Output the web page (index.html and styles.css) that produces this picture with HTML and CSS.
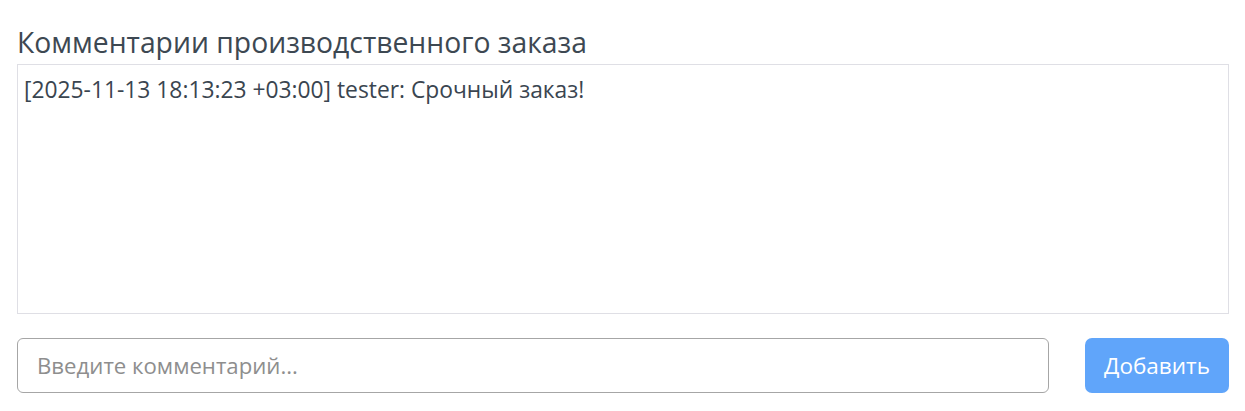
FILE: index.html
```html
<!DOCTYPE html>
<html lang="ru">
<head>
<meta charset="utf-8">
<link rel="stylesheet" href="styles.css">
</head>
<body>
<section class="comments">
  <h2 class="comments-title">Комментарии производственного заказа</h2>
  <div class="comments-log">[2025-11-13 18:13:23 +03:00] tester: Срочный заказ!</div>
  <form class="comment-form">
    <input class="comment-input" type="text" placeholder="Введите комментарий...">
    <button class="comment-btn" type="button">Добавить</button>
  </form>
</section>
</body>
</html>
```
FILE: styles.css
```css
html, body {
  margin: 0;
  background: #ffffff;
}
body {
  font-family: "Open Sans", "Noto Sans", sans-serif;
  color: #3a4550;
}
.comments {
  padding: 23px 16px 0 17px;
}
.comments-title {
  margin: 0 0 3px 0;
  font-size: 28.3px;
  font-weight: 400;
  line-height: 38px;
  color: #3d4852;
}
.comments-log {
  height: 250px;
  box-sizing: border-box;
  border: 1px solid #dfdfe5;
  padding: 10px 6px;
  font-size: 22.8px;
  line-height: 30px;
  color: #3a4550;
}
.comment-form {
  display: flex;
  gap: 36px;
  margin-top: 24px;
}
.comment-input {
  flex: 1;
  height: 55px;
  box-sizing: border-box;
  border: 1px solid #a6a6a6;
  border-radius: 6px;
  padding: 0 19px;
  font-family: inherit;
  font-size: 22.2px;
  color: #3a4550;
  outline: none;
}
.comment-input::placeholder {
  color: #8e8e8e;
}
.comment-btn {
  width: 144px;
  height: 55px;
  border: none;
  border-radius: 7px;
  background: #60a5fa;
  color: #ffffff;
  font-family: inherit;
  font-size: 22.5px;
  padding: 0;
}
```
